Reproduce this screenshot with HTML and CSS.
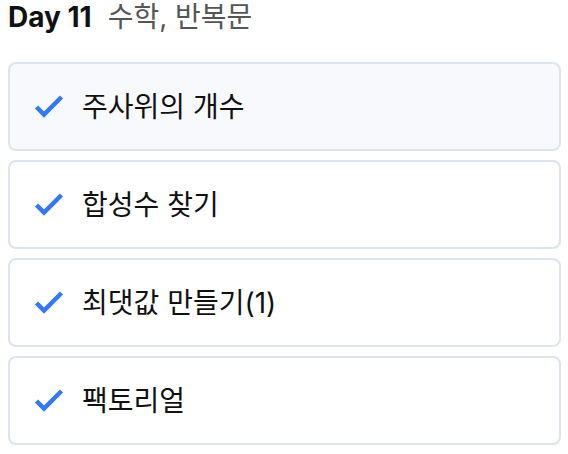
FILE: index.html
```html
<!DOCTYPE html>
<html lang="ko">
<head>
    <meta charset="UTF-8">
    <meta name="viewport" content="width=device-width, initial-scale=1.0">
    <title>Day 11</title>
    <link rel="stylesheet" href="styles.css">
</head>
<body>
    <div class="page">
        <h1 class="day-title">
            <span class="day-num">Day 11</span>
            <span class="day-topic">수학, 반복문</span>
        </h1>

        <ul class="problem-list">
            <li class="problem active">
                <svg class="check" viewBox="0 0 30 24"><path d="M2.5 12 L10 19.5 L27.5 2"/></svg>
                <span class="problem-name">주사위의 개수</span>
            </li>
            <li class="problem">
                <svg class="check" viewBox="0 0 30 24"><path d="M2.5 12 L10 19.5 L27.5 2"/></svg>
                <span class="problem-name">합성수 찾기</span>
            </li>
            <li class="problem">
                <svg class="check" viewBox="0 0 30 24"><path d="M2.5 12 L10 19.5 L27.5 2"/></svg>
                <span class="problem-name">최댓값 만들기(1)</span>
            </li>
            <li class="problem">
                <svg class="check" viewBox="0 0 30 24"><path d="M2.5 12 L10 19.5 L27.5 2"/></svg>
                <span class="problem-name">팩토리얼</span>
            </li>
        </ul>
    </div>
</body>
</html>
```

FILE: styles.css
```css
* {
    margin: 0;
    padding: 0;
    box-sizing: border-box;
}

body {
    font-family: Inter, "Noto Sans CJK KR", sans-serif;
    color: #111;
    background: #fff;
}

.page {
    padding: 0 7px 0 8px;
}

.day-title {
    font-size: 28px;
    line-height: 34px;
    font-weight: 400;
    display: flex;
    align-items: baseline;
    gap: 16px;
}

.day-num {
    font-weight: 700;
    color: #111;
}

.day-topic {
    color: #555;
}

.problem-list {
    list-style: none;
    margin-top: 28px;
    display: flex;
    flex-direction: column;
    gap: 9px;
}

.problem {
    height: 89px;
    border: 2px solid #dde4ed;
    border-radius: 8px;
    background: #fff;
    display: flex;
    align-items: center;
    padding-left: 24px;
    gap: 18px;
}

.problem.active {
    background: #f8f9fc;
}

.check {
    width: 30px;
    height: 24px;
    flex-shrink: 0;
}

.check path {
    fill: none;
    stroke: #3478f6;
    stroke-width: 4.5;
}

.problem-name {
    font-size: 28px;
    line-height: 34px;
    color: #111;
}
```
